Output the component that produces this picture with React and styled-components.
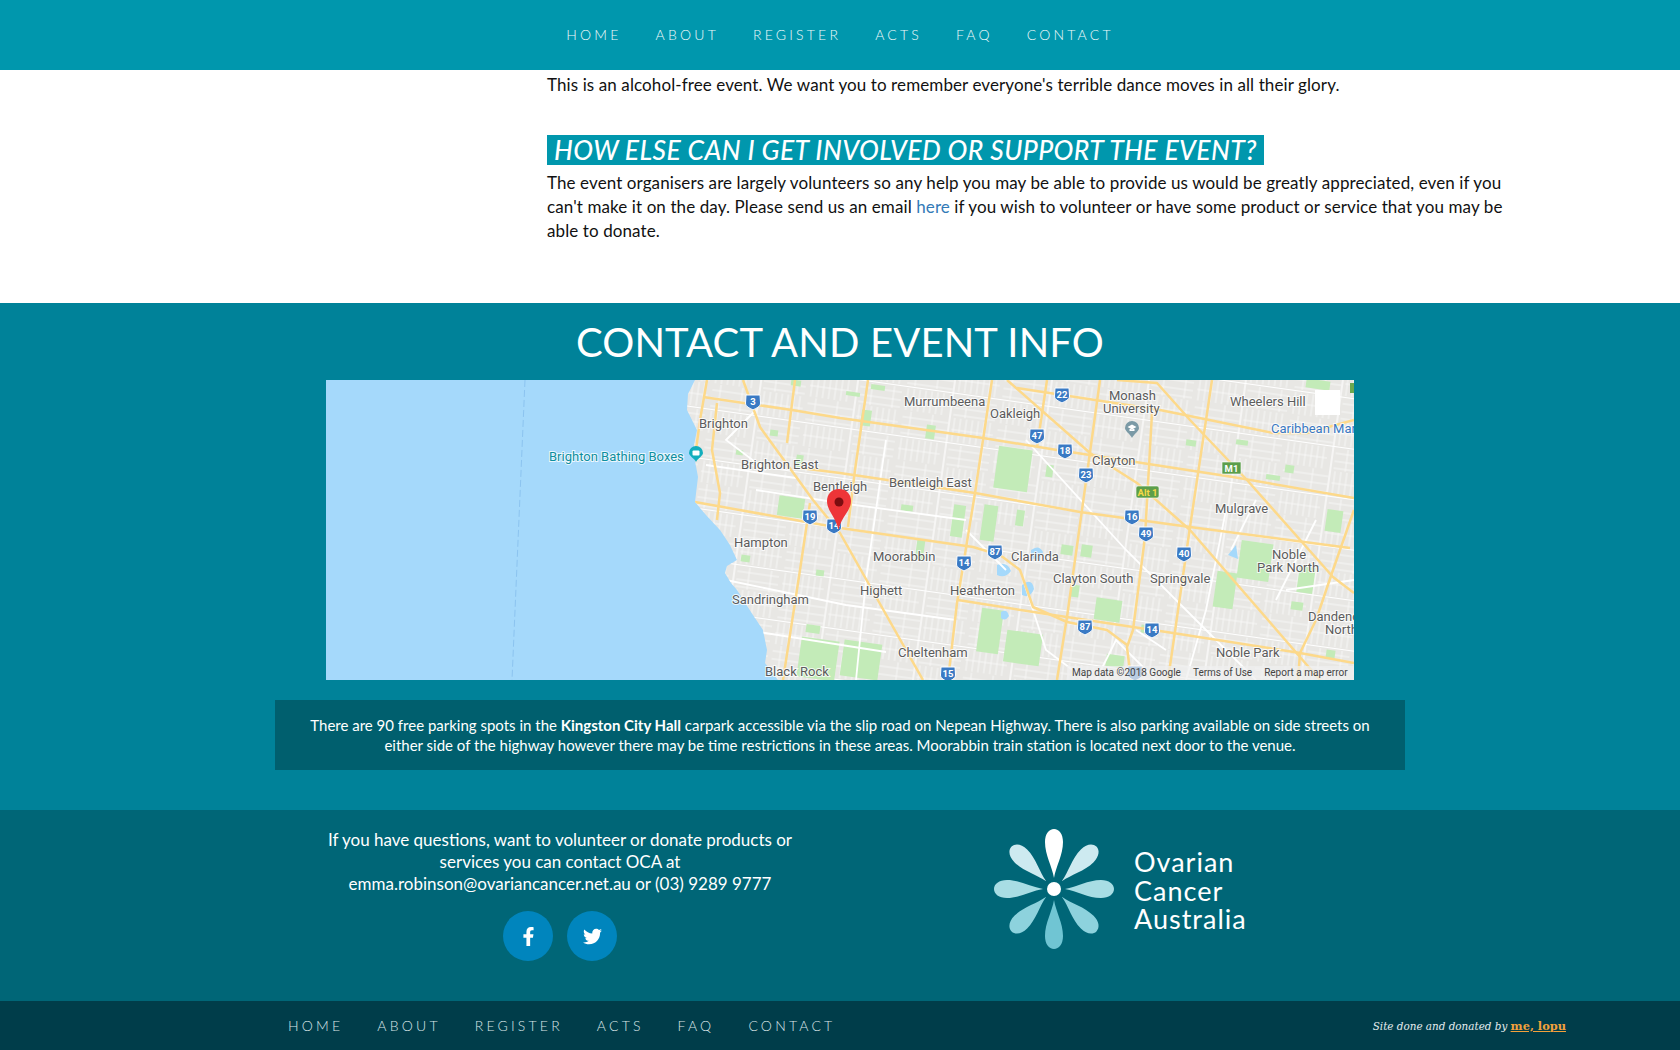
import React from 'react';
import styled, { createGlobalStyle } from 'styled-components';
import { FaFacebookF, FaTwitter } from 'react-icons/fa';

const GlobalStyle = createGlobalStyle`
  html, body { margin: 0; padding: 0; background: #fff; }
  body { font-family: Lato, "Liberation Sans", sans-serif; color: #111; }
  * { box-sizing: border-box; }
`;

const Header = styled.header`
  height: 70px;
  padding-bottom: 2px;
  background: #0097ad;
  display: flex;
  align-items: center;
  justify-content: center;
`;

const Nav = styled.nav`
  display: flex;
  gap: 34px;
`;

const NavLink = styled.a`
  font-size: 14px;
  font-weight: 300;
  letter-spacing: 3.2px;
  color: ${p => p.$dim ? '#dbe6e8' : '#f0fafb'};
  text-transform: uppercase;
`;

const Content = styled.main`
  height: 233px;
  padding-left: 547px;
  font-size: 17px;
  line-height: 24px;
  letter-spacing: .1px;
`;

const Para = styled.p`
  margin: 0;
  padding-top: ${p => p.$top || 0}px;
`;

const QuestionWrap = styled.div`
  margin-top: 38px;
  margin-bottom: 5px;
`;

const Question = styled.h3`
  display: inline-block;
  margin: 0;
  height: 30px;
  padding: 0 7px;
  background: #0097ad;
  color: #fff;
  font-size: 26.5px;
  line-height: 30px;
  letter-spacing: .4px;
  font-weight: 500;
  font-style: italic;
`;

const TextLink = styled.a`
  color: #337ab7;
`;

const InfoSection = styled.section`
  height: 507px;
  background: #008299;
  padding-top: 15px;
  display: flex;
  flex-direction: column;
  align-items: center;
`;

const Title = styled.h2`
  margin: 0;
  height: 62px;
  font-size: 40px;
  line-height: 48px;
  letter-spacing: .15px;
  font-weight: 400;
  color: #fff;
`;

const MapFrame = styled.div`
  position: relative;
  width: 1028px;
  height: 300px;
  overflow: hidden;
  background: #a5d9fb;
`;

const MapSvg = styled.svg`
  display: block;
`;

const MapBlank = styled.div`
  position: absolute;
  left: 989px;
  top: 10px;
  width: 25px;
  height: 25px;
  background: #fff;
`;

const Attribution = styled.div`
  position: absolute;
  right: 0;
  bottom: 0;
  width: 287px;
  height: 14px;
  padding-left: 5px;
  display: flex;
  background: rgba(240, 240, 240, .7);
  font-family: Roboto, sans-serif;
  font-size: 10px;
  line-height: 14px;
  color: #444;
  gap: 12px;
  white-space: nowrap;
`;

const Note = styled.div`
  margin-top: 20px;
  width: 1130px;
  height: 70px;
  padding-top: 15px;
  background: #005f6e;
  color: #fff;
  text-align: center;
  font-size: 15px;
  line-height: 20px;
`;

const ContactBar = styled.section`
  height: 191px;
  background: #006677;
  display: grid;
  grid-template-columns: 845px 1fr;
`;

const ContactText = styled.div`
  padding: 19px 0 0 275px;
  text-align: center;
  color: #fff;
  font-size: 17px;
  line-height: 22px;
`;

const Socials = styled.div`
  display: flex;
  justify-content: center;
  gap: 14px;
  margin-top: 16px;
`;

const SocialCircle = styled.a`
  width: 50px;
  height: 50px;
  border-radius: 50%;
  background: #0085bd;
  color: #fff;
  display: flex;
  align-items: center;
  justify-content: center;
  font-size: 19px;
`;

const LogoSvg = styled.svg`
  display: block;
  margin: 15px 0 0 145px;
`;

const BottomBar = styled.footer`
  height: 49px;
  background: #003d4a;
  display: flex;
  align-items: center;
  justify-content: space-between;
  padding: 0 114px 0 288px;
`;

const Credit = styled.div`
  font-family: "DejaVu Serif", serif;
  font-style: italic;
  font-size: 10.4px;
  color: #e4ecee;

  a {
    color: #f2a13c;
    font-style: normal;
    font-weight: 700;
    font-size: 11.4px;
    text-decoration: underline;
  }
`;

const NavItems = ({ dim }) => (
  <Nav>
    {['Home', 'About', 'Register', 'Acts', 'FAQ', 'Contact'].map(n => (
      <NavLink key={n} $dim={dim}>{n}</NavLink>
    ))}
  </Nav>
);

const land = 'M369 0 L362 14 L361 30 L367 42 L371 50 L367 70 L372 97 L369 122 L380 135 L394 150 L404 165 L411 180 L401 186 L399 193 L405 203 L411 210 L425 232 L437 250 L441 270 L439 283 L452 300 L1028 300 L1028 0 Z';

const yellowRoads = [
  'M377 17 L466 30 L514 38 L657 58 L731 70 L764 75 L907 97 L1028 118',
  'M474 88 L514 93 L649 113 L754 132 L864 147 L1024 168',
  'M369 122 L514 148 L647 167 L674 175 L694 190 L707 227 L741 242 L781 250 L801 265',
  'M632 220 L714 233 L847 253 L974 273 L1028 283',
  'M381 0 L374 40 L370 70',
  'M391 23 L386 70 L394 113 L391 140',
  'M469 0 L461 63 M484 123 L474 190 L457 300',
  'M542 0 L529 90 L522 147',
  'M666 0 L649 113 L631 223 L622 300',
  'M774 0 L756 130 L741 237 L731 300',
  'M721 0 L711 67',
  'M826 33 L819 157 L807 250 L801 267 L805 300',
  'M886 0 L864 147 L842 300',
  'M417 0 L434 47 L487 120 L514 153 L597 300',
  'M681 0 L764 73 L811 103 L864 150 L974 277 L994 300',
  'M791 0 L831 3 L864 40 L921 100 L1007 197 L1028 213',
  'M1028 130 L1007 190 L990 240 L974 273 L972 300',
  'M691 8 L834 30 L947 53 L981 53 L1028 40',
];

const whiteRoads = [
  'M430 110 L514 123 L640 140 M380 85 L470 98',
  'M560 60 L540 200 L530 300',
  'M640 150 L680 190 M700 60 L800 170 L880 250 L930 300',
  'M694 190 L720 270 L760 300',
  'M770 300 L790 260 L830 300 M810 250 L840 270',
  'M900 130 L880 230 L860 300 M930 120 L905 170',
  'M400 200 L520 225 L630 240 M420 250 L560 272',
  'M960 210 L1028 200 M950 220 L990 140',
  'M430 30 L400 60 L440 90',
];

const parks = [
  [670,68,34,42],[626,125,12,32],[656,125,14,36],[913,162,32,38],[889,192,20,36],[769,219,26,22],
  [653,229,22,44],[679,252,36,32],[516,262,38,36],[473,259,38,40],[972,187,16,26],[452,117,26,20],
  [535,30,10,16],[545,5,14,5],[720,85,7,12],[735,165,12,10],[755,165,11,12],[575,125,12,6],[590,160,8,20],
  [1000,130,16,22],[959,85,9,8],[980,0,24,9],[965,222,12,8],[1000,270,9,9],[415,175,9,7],[490,190,8,6],
  [480,245,14,8],[470,75,7,12],[465,0,10,6],[910,60,12,5],[745,205,8,12],[815,245,8,8],[780,275,18,12],
  [444,50,8,6],[410,70,7,5],[520,12,14,4],[600,45,9,14],[690,130,8,16],[860,60,10,6],[940,95,14,5],
];

const shields = [
  ['3',427,22],['19',484,137],['14',508,146],['22',736,15],['47',711,56],['18',739,71],['23',760,95],
  ['16',806,137],['49',820,154],['40',858,174],['87',669,172],['14',638,183],['87',759,247],['14',826,250],
  ['15',622,294],['',809,293],
];

const labels = [
  ['Brighton',373,43],['Brighton East',415,84],['Bentleigh',487,106],['Hampton',408,162],['Sandringham',406,219],
  ['Black Rock',439,291],['Murrumbeena',578,21],['Oakleigh',664,33],['Monash',783,15],['University',777,28],
  ['Wheelers Hill',904,21],['Clayton',766,80],['Bentleigh East',563,102],['Mulgrave',889,128],['Moorabbin',547,176],
  ['Clarinda',685,176],['Clayton South',727,198],['Springvale',824,198],['Highett',534,210],['Heatherton',624,210],
  ['Noble',946,174],['Park North',931,187],['Dandenong',982,236],['North',999,249],['Cheltenham',572,272],['Noble Park',890,272],
];

const Shield = ({ text, x, y }) => (
  <g transform={`translate(${x} ${y})`}>
    <path d="M-7 -7 H7 L7.5 1 C7.5 5 3 6 0 8 C-3 6 -7.5 5 -7.5 1 Z" fill="#3a7ac4" stroke="#fff" strokeWidth="1" />
    <text y="3" textAnchor="middle" fontFamily="Roboto, sans-serif" fontSize="9.5" fontWeight="700" fill="#fff">{text}</text>
  </g>
);

const Label = ({ x, y, fill = '#5c5c5c', children }) => (
  <text x={x} y={y + 4.5} fontFamily="Roboto, sans-serif" fontSize="13" fill={fill} stroke="#fff" strokeOpacity=".8" strokeWidth="2" paintOrder="stroke">{children}</text>
);

const MapDrawing = () => (
  <MapSvg width="1028" height="300" viewBox="0 0 1028 300">
    <defs>
      <pattern id="blocks" width="96" height="50" patternUnits="userSpaceOnUse" patternTransform="rotate(8)">
        <path d="M0 6H46M0 14H46M0 22H46M8 0V24M30 0V24" stroke="#fff" strokeWidth=".8" />
        <path d="M52 0V24M58 0V24M64 0V24M70 0V24M76 0V24M82 0V24M88 0V24M50 12H92" stroke="#fff" strokeWidth=".8" />
        <path d="M2 27V49M8 27V49M14 27V49M20 27V49M26 27V49M32 27V49M38 27V49M0 38H42" stroke="#fff" strokeWidth=".8" />
        <path d="M50 32H92M50 40H92M50 47H92M62 27V49M84 27V49" stroke="#fff" strokeWidth=".8" />
      </pattern>
      <pattern id="avenues" width="96" height="50" patternUnits="userSpaceOnUse" patternTransform="rotate(8)">
        <path d="M0 25.5H96" stroke="#fff" strokeWidth="1.2" />
        <path d="M47 0V50" stroke="#fff" strokeWidth="1.2" />
      </pattern>
      <clipPath id="landClip"><path d={land} /></clipPath>
    </defs>
    <rect width="1028" height="300" fill="#a5d9fb" />
    <path d="M199 0 L186 300" stroke="#8cc4f0" strokeWidth="1" strokeDasharray="7 3" fill="none" />
    <path d={land} fill="#e8e7e4" />
    <g clipPath="url(#landClip)">
      <rect width="1028" height="300" fill="url(#blocks)" opacity=".8" />
      <rect width="1028" height="300" fill="url(#avenues)" />
      {parks.map(([x, y, w, h], i) => (
        <rect key={i} x={x} y={y} width={w} height={h} fill="#c3ebb8" transform={`rotate(8 ${x + w / 2} ${y + h / 2})`} />
      ))}
      <path d="M705 170 q8 -6 12 2 q-2 10 -12 6Z M671 185 q10 -4 14 6 q-6 8 -14 4Z M696 205 q10 -8 12 4 q-4 10 -12 6Z M902 175 l8 -10 l2 14Z M675 232 q6 -4 8 4 q-4 6 -8 2Z" fill="#a5d9fb" />
      {whiteRoads.map((d, i) => (
        <path key={i} d={d} stroke="#fff" strokeWidth="1.8" fill="none" />
      ))}
      {yellowRoads.map((d, i) => (
        <path key={i} d={d} stroke="#fdd98a" strokeWidth="2.5" fill="none" strokeLinejoin="round" />
      ))}
    </g>
    {labels.map(([t, x, y]) => <Label key={t} x={x} y={y}>{t}</Label>)}
    <Label x={223} y={76} fill="#0e8f9e">Brighton Bathing Boxes</Label>
    <Label x={945} y={48} fill="#3a78c2">Caribbean Mar</Label>
    {shields.map(([t, x, y], i) => <Shield key={i} text={t} x={x} y={y} />)}
    <g fontFamily="Roboto, sans-serif" fontSize="9.5" fontWeight="700" textAnchor="middle">
      <rect x="896" y="82" width="19" height="12" fill="#5c9e4a" stroke="#fff" strokeWidth=".6" />
      <text x="905.5" y="91.5" fill="#fff">M1</text>
      <rect x="810" y="106" width="23" height="12" rx="2" fill="#5c9e4a" stroke="#fff" strokeWidth=".6" />
      <text x="821.5" y="115.5" fill="#f6d948">Alt 1</text>
    </g>
    <g transform="translate(370 73)">
      <path d="M-7 0 A7 7 0 1 1 7 0 C7 3 2 5 0 9 C-2 5 -7 3 -7 0Z" fill="#12aebd" />
      <rect x="-3.5" y="-2.5" width="7" height="5" rx="1" fill="#fff" />
    </g>
    <g transform="translate(806 48)">
      <path d="M-7 0 A7 7 0 1 1 7 0 C7 3 2 6 0 10 C-2 6 -7 3 -7 0Z" fill="#7b9aa6" />
      <path d="M-4.5 -1 L0 -3.5 L4.5 -1 L0 1.5Z M-2.5 1 V3 H2.5 V1" fill="#fff" />
    </g>
    <path d="M513 109 C505 109 501 115 501 121 C501 131 510 137 512.5 150 C515 137 525 131 525 121 C525 115 521 109 513 109Z" fill="#ee3538" />
    <circle cx="513" cy="122" r="4.5" fill="#7c0d10" />
    <rect x="1024" y="3" width="4" height="10" fill="#6aa84f" />
  </MapSvg>
);

const petals = [
  [0, '#ffffff'], [45, '#cdeaf0'], [90, '#a8dde4'], [135, '#8dd2dd'],
  [180, '#70c5d3'], [225, '#8dd2dd'], [270, '#a8dde4'], [315, '#cdeaf0'],
];

const Logo = () => (
  <LogoSvg width="260" height="130" viewBox="0 0 260 130">
    <g transform="translate(64 64)">
      {petals.map(([a, c]) => (
        <path key={a} transform={`rotate(${a})`} fill={c}
          d="M0 -11 C-2 -23 -9 -34 -9 -47 C-9 -55 -5 -60 0 -60 C5 -60 9 -55 9 -47 C9 -34 2 -23 0 -11Z" />
      ))}
      <circle r="7" fill="#fff" />
    </g>
    <g fontFamily="Lato, sans-serif" fontSize="27" fontWeight="400" fill="#fff" letterSpacing="1">
      <text x="144" y="47">Ovarian</text>
      <text x="144" y="76">Cancer</text>
      <text x="144" y="104">Australia</text>
    </g>
  </LogoSvg>
);

export default function App() {
  return (
    <>
      <GlobalStyle />
      <Header><NavItems /></Header>
      <Content>
        <Para $top={3}>This is an alcohol-free event. We want you to remember everyone's terrible dance moves in all their glory.</Para>
        <QuestionWrap>
          <Question>HOW ELSE CAN I GET INVOLVED OR SUPPORT THE EVENT?</Question>
        </QuestionWrap>
        <Para>
          The event organisers are largely volunteers so any help you may be able to provide us would be greatly appreciated, even if you<br />
          can't make it on the day. Please send us an email <TextLink>here</TextLink> if you wish to volunteer or have some product or service that you may be<br />
          able to donate.
        </Para>
      </Content>
      <InfoSection>
        <Title>CONTACT AND EVENT INFO</Title>
        <MapFrame>
          <MapDrawing />
          <MapBlank />
          <Attribution>
            <span>Map data ©2018 Google</span>
            <span>Terms of Use</span>
            <span>Report a map error</span>
          </Attribution>
        </MapFrame>
        <Note>
          There are 90 free parking spots in the <b>Kingston City Hall</b> carpark accessible via the slip road on Nepean Highway. There is also parking available on side streets on<br />
          either side of the highway however there may be time restrictions in these areas. Moorabbin train station is located next door to the venue.
        </Note>
      </InfoSection>
      <ContactBar>
        <ContactText>
          If you have questions, want to volunteer or donate products or<br />
          services you can contact OCA at<br />
          emma.robinson@ovariancancer.net.au or (03) 9289 9777
          <Socials>
            <SocialCircle><FaFacebookF /></SocialCircle>
            <SocialCircle><FaTwitter /></SocialCircle>
          </Socials>
        </ContactText>
        <div><Logo /></div>
      </ContactBar>
      <BottomBar>
        <NavItems dim />
        <Credit>Site done and donated by <a>me, lopu</a></Credit>
      </BottomBar>
    </>
  );
}
